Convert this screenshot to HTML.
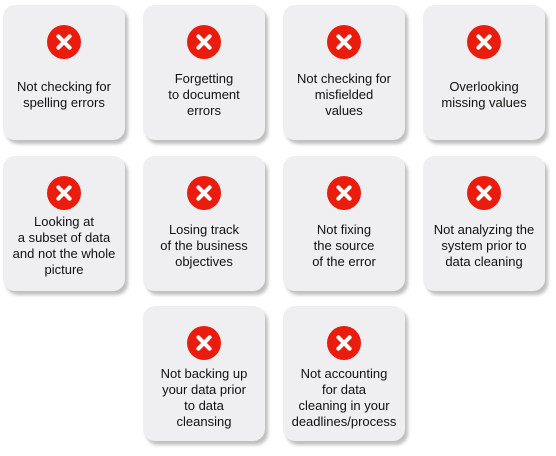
<!DOCTYPE html>
<html><head><style>
body{margin:0;width:556px;height:456px;background:#fff;position:relative;overflow:hidden;font-family:"Liberation Sans",Arial,sans-serif}
.c{position:absolute;width:122px;height:135px;background:#efeff1;border-radius:12px;box-shadow:3px 4px 3px rgba(0,0,0,0.25)}
.i{position:absolute;left:44px;top:20px;width:34px;height:34px;border-radius:50%;background:#ea1c0d}
.i:before,.i:after{content:"";position:absolute;left:7px;top:15px;width:20px;height:4px;background:#fff;border-radius:2px;transform:rotate(45deg)}
.i:after{transform:rotate(-45deg)}
.t{position:absolute;left:0;right:0;top:90px;transform:translateY(-50%);text-align:center;font-size:13px;line-height:16px;color:#111}
</style></head><body>
<div class="c" style="left:3px;top:5px"><div class="i"></div><div class="t">Not checking for<br>spelling errors</div></div>
<div class="c" style="left:143px;top:5px"><div class="i"></div><div class="t">Forgetting<br>to document<br>errors</div></div>
<div class="c" style="left:283px;top:5px"><div class="i"></div><div class="t">Not checking for<br>misfielded<br>values</div></div>
<div class="c" style="left:423px;top:5px"><div class="i"></div><div class="t">Overlooking<br>missing values</div></div>
<div class="c" style="left:3px;top:156px"><div class="i"></div><div class="t">Looking at<br>a subset of data<br>and not the whole<br>picture</div></div>
<div class="c" style="left:143px;top:156px"><div class="i"></div><div class="t">Losing track<br>of the business<br>objectives</div></div>
<div class="c" style="left:283px;top:156px"><div class="i"></div><div class="t">Not fixing<br>the source<br>of the error</div></div>
<div class="c" style="left:423px;top:156px"><div class="i"></div><div class="t">Not analyzing the<br>system prior to<br>data cleaning</div></div>
<div class="c" style="left:143px;top:306px"><div class="i"></div><div class="t" style="top:92px">Not backing up<br>your data prior<br>to data<br>cleansing</div></div>
<div class="c" style="left:283px;top:306px"><div class="i"></div><div class="t" style="top:92px">Not accounting<br>for data<br>cleaning in your<br>deadlines/process</div></div>
</body></html>
